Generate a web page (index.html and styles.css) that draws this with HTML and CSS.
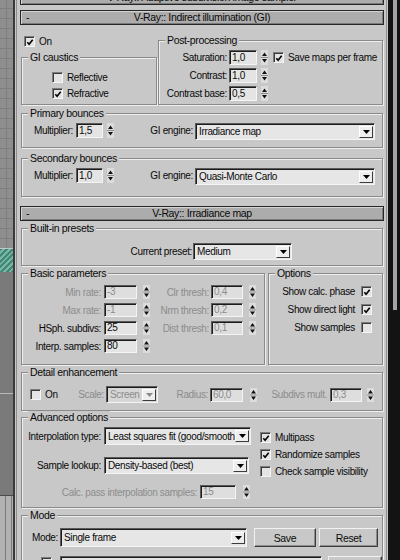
FILE: index.html
```html
<!DOCTYPE html>
<html>
<head>
<meta charset="utf-8">
<title>V-Ray settings</title>
<link rel="stylesheet" href="styles.css">
</head>
<body>
<div class="app">
  <div class="viewport">
    <div class="vp-grid"></div>
    <div class="vp-teal"></div>
    <div class="vp-mid"></div>
    <div class="vp-time"></div>
  </div>
  <div class="sep"></div>
  <div class="panel">
    <div class="hdr hdr-cut"><span class="sign">+</span><span class="title">V-Ray:: Adaptive subdivision image sampler</span></div>

    <div class="hdr hdr-gi"><span class="sign">-</span><span class="title">V-Ray:: Indirect illumination (GI)</span></div>
    <div class="rbody">
      <div class="gi-top">
        <div class="col-left">
          <div class="chk-row on-row">
            <span class="cb"><svg width="9" height="9" viewBox="0 0 9 9"><path d="M1.5 4.2 L3.5 6.5 L7.5 1.5" fill="none" stroke="#000" stroke-width="1.8"/></svg></span>
            <span class="ctext">On</span>
          </div>
          <div class="grp gi-caustics">
            <span class="glab">GI caustics</span>
            <div class="chk-row">
              <span class="cb"></span>
              <span class="ctext">Reflective</span>
            </div>
            <div class="chk-row">
              <span class="cb"><svg width="9" height="9" viewBox="0 0 9 9"><path d="M1.5 4.2 L3.5 6.5 L7.5 1.5" fill="none" stroke="#000" stroke-width="1.8"/></svg></span>
              <span class="ctext">Refractive</span>
            </div>
          </div>
        </div>
        <div class="grp post">
          <span class="glab">Post-processing</span>
          <div class="prow">
            <span class="lab l-post">Saturation:</span>
            <span class="num n-post">1,0</span>
            <svg class="spin" width="7" height="15" viewBox="0 0 7 15"><rect width="7" height="15" fill="#dcdcdc"/><path d="M0 7.5h7" stroke="#8a8a8a"/><path d="M1 6h5L3.5 2.5z M1 9h5L3.5 12.5z" fill="#111"/></svg>
            <span class="cb cb-save"><svg width="9" height="9" viewBox="0 0 9 9"><path d="M1.5 4.2 L3.5 6.5 L7.5 1.5" fill="none" stroke="#000" stroke-width="1.8"/></svg></span>
            <span class="ctext">Save maps per frame</span>
          </div>
          <div class="prow">
            <span class="lab l-post">Contrast:</span>
            <span class="num n-post">1,0</span>
            <svg class="spin" width="7" height="15" viewBox="0 0 7 15"><rect width="7" height="15" fill="#dcdcdc"/><path d="M0 7.5h7" stroke="#8a8a8a"/><path d="M1 6h5L3.5 2.5z M1 9h5L3.5 12.5z" fill="#111"/></svg>
          </div>
          <div class="prow">
            <span class="lab l-post">Contrast base:</span>
            <span class="num n-post">0,5</span>
            <svg class="spin" width="7" height="15" viewBox="0 0 7 15"><rect width="7" height="15" fill="#dcdcdc"/><path d="M0 7.5h7" stroke="#8a8a8a"/><path d="M1 6h5L3.5 2.5z M1 9h5L3.5 12.5z" fill="#111"/></svg>
          </div>
        </div>
      </div>

      <div class="grp bounce primary">
        <span class="glab">Primary bounces</span>
        <div class="brow-b">
          <span class="lab l-mult">Multiplier:</span>
          <span class="num n-mult">1,5</span>
          <svg class="spin s-mult" width="7" height="15" viewBox="0 0 7 15"><rect width="7" height="15" fill="#dcdcdc"/><path d="M0 7.5h7" stroke="#8a8a8a"/><path d="M1 6h5L3.5 2.5z M1 9h5L3.5 12.5z" fill="#111"/></svg>
          <span class="lab l-eng">GI engine:</span>
          <div class="dd d-eng"><span class="ddtext">Irradiance map</span><span class="ddbtn"><svg width="7" height="4" viewBox="0 0 7 4"><path d="M0 0h7L3.5 4z" fill="#000"/></svg></span></div>
        </div>
      </div>

      <div class="grp bounce secondary">
        <span class="glab">Secondary bounces</span>
        <div class="brow-b">
          <span class="lab l-mult">Multiplier:</span>
          <span class="num n-mult">1,0</span>
          <svg class="spin s-mult" width="7" height="15" viewBox="0 0 7 15"><rect width="7" height="15" fill="#dcdcdc"/><path d="M0 7.5h7" stroke="#8a8a8a"/><path d="M1 6h5L3.5 2.5z M1 9h5L3.5 12.5z" fill="#111"/></svg>
          <span class="lab l-eng">GI engine:</span>
          <div class="dd d-eng"><span class="ddtext">Quasi-Monte Carlo</span><span class="ddbtn"><svg width="7" height="4" viewBox="0 0 7 4"><path d="M0 0h7L3.5 4z" fill="#000"/></svg></span></div>
        </div>
      </div>
    </div>

    <div class="hdr hdr-irr"><span class="sign">-</span><span class="title">V-Ray:: Irradiance map</span></div>
    <div class="rbody">
      <div class="grp presets">
        <span class="glab">Built-in presets</span>
        <div class="preset-row">
          <span class="lab">Current preset:</span>
          <div class="dd d-preset"><span class="ddtext">Medium</span><span class="ddbtn"><svg width="7" height="4" viewBox="0 0 7 4"><path d="M0 0h7L3.5 4z" fill="#000"/></svg></span></div>
        </div>
      </div>

      <div class="basic-opts">
        <div class="grp basic">
          <span class="glab">Basic parameters</span>
          <div class="brow">
            <span class="lab l-b1 dis">Min rate:</span>
            <span class="num n-b1 dis">-3</span>
            <svg class="spin s-b" width="7" height="14" viewBox="0 0 7 14"><rect width="7" height="14" fill="#dcdcdc"/><path d="M0 7h7" stroke="#8a8a8a"/><path d="M1 5.5h5L3.5 2z M1 8.5h5L3.5 12z" fill="#111"/></svg>
            <span class="lab l-b2 dis">Clr thresh:</span>
            <span class="num n-b2 dis">0,4</span>
            <svg class="spin s-b" width="7" height="14" viewBox="0 0 7 14"><rect width="7" height="14" fill="#dcdcdc"/><path d="M0 7h7" stroke="#8a8a8a"/><path d="M1 5.5h5L3.5 2z M1 8.5h5L3.5 12z" fill="#111"/></svg>
          </div>
          <div class="brow">
            <span class="lab l-b1 dis">Max rate:</span>
            <span class="num n-b1 dis">-1</span>
            <svg class="spin s-b" width="7" height="14" viewBox="0 0 7 14"><rect width="7" height="14" fill="#dcdcdc"/><path d="M0 7h7" stroke="#8a8a8a"/><path d="M1 5.5h5L3.5 2z M1 8.5h5L3.5 12z" fill="#111"/></svg>
            <span class="lab l-b2 dis">Nrm thresh:</span>
            <span class="num n-b2 dis">0,2</span>
            <svg class="spin s-b" width="7" height="14" viewBox="0 0 7 14"><rect width="7" height="14" fill="#dcdcdc"/><path d="M0 7h7" stroke="#8a8a8a"/><path d="M1 5.5h5L3.5 2z M1 8.5h5L3.5 12z" fill="#111"/></svg>
          </div>
          <div class="brow">
            <span class="lab l-b1">HSph. subdivs:</span>
            <span class="num n-b1">25</span>
            <svg class="spin s-b" width="7" height="14" viewBox="0 0 7 14"><rect width="7" height="14" fill="#dcdcdc"/><path d="M0 7h7" stroke="#8a8a8a"/><path d="M1 5.5h5L3.5 2z M1 8.5h5L3.5 12z" fill="#111"/></svg>
            <span class="lab l-b2 dis">Dist thresh:</span>
            <span class="num n-b2 dis">0,1</span>
            <svg class="spin s-b" width="7" height="14" viewBox="0 0 7 14"><rect width="7" height="14" fill="#dcdcdc"/><path d="M0 7h7" stroke="#8a8a8a"/><path d="M1 5.5h5L3.5 2z M1 8.5h5L3.5 12z" fill="#111"/></svg>
          </div>
          <div class="brow">
            <span class="lab l-b1">Interp. samples:</span>
            <span class="num n-b1">80</span>
            <svg class="spin s-b" width="7" height="14" viewBox="0 0 7 14"><rect width="7" height="14" fill="#dcdcdc"/><path d="M0 7h7" stroke="#8a8a8a"/><path d="M1 5.5h5L3.5 2z M1 8.5h5L3.5 12z" fill="#111"/></svg>
          </div>
        </div>
        <div class="grp opts">
          <span class="glab">Options</span>
          <div class="orow">
            <span class="ctext">Show calc. phase</span>
            <span class="cb"><svg width="9" height="9" viewBox="0 0 9 9"><path d="M1.5 4.2 L3.5 6.5 L7.5 1.5" fill="none" stroke="#000" stroke-width="1.8"/></svg></span>
          </div>
          <div class="orow">
            <span class="ctext">Show direct light</span>
            <span class="cb"><svg width="9" height="9" viewBox="0 0 9 9"><path d="M1.5 4.2 L3.5 6.5 L7.5 1.5" fill="none" stroke="#000" stroke-width="1.8"/></svg></span>
          </div>
          <div class="orow">
            <span class="ctext">Show samples</span>
            <span class="cb"></span>
          </div>
        </div>
      </div>

      <div class="grp detail">
        <span class="glab">Detail enhancement</span>
        <div class="drow">
          <span class="cb cb-don"></span>
          <span class="ctext d-on">On</span>
          <span class="lab l-scale dis">Scale:</span>
          <div class="dd d-screen dis"><span class="ddtext">Screen</span><span class="ddbtn"><svg width="7" height="4" viewBox="0 0 7 4"><path d="M0 0h7L3.5 4z" fill="#8a8a8a"/></svg></span></div>
          <span class="lab l-rad dis">Radius:</span>
          <span class="num n-rad dis">60,0</span>
          <svg class="spin s-rad" width="7" height="14" viewBox="0 0 7 14"><rect width="7" height="14" fill="#dcdcdc"/><path d="M0 7h7" stroke="#8a8a8a"/><path d="M1 5.5h5L3.5 2z M1 8.5h5L3.5 12z" fill="#111"/></svg>
          <span class="lab l-sub dis">Subdivs mult.</span>
          <span class="num n-sub dis">0,3</span>
          <svg class="spin s-sub" width="7" height="14" viewBox="0 0 7 14"><rect width="7" height="14" fill="#dcdcdc"/><path d="M0 7h7" stroke="#8a8a8a"/><path d="M1 5.5h5L3.5 2z M1 8.5h5L3.5 12z" fill="#111"/></svg>
        </div>
      </div>

      <div class="grp adv">
        <span class="glab">Advanced options</span>
        <div class="adv-top">
          <div class="adv-left">
            <div class="arow">
              <span class="lab l-adv">Interpolation type:</span>
              <div class="dd d-interp"><span class="ddtext">Least squares fit (good/smooth</span><span class="ddbtn"><svg width="7" height="4" viewBox="0 0 7 4"><path d="M0 0h7L3.5 4z" fill="#000"/></svg></span></div>
            </div>
            <div class="arow arow2">
              <span class="lab l-adv">Sample lookup:</span>
              <div class="dd d-lookup"><span class="ddtext">Density-based (best)</span><span class="ddbtn"><svg width="7" height="4" viewBox="0 0 7 4"><path d="M0 0h7L3.5 4z" fill="#000"/></svg></span></div>
            </div>
          </div>
          <div class="adv-right">
            <div class="chk-row">
              <span class="cb"><svg width="9" height="9" viewBox="0 0 9 9"><path d="M1.5 4.2 L3.5 6.5 L7.5 1.5" fill="none" stroke="#000" stroke-width="1.8"/></svg></span>
              <span class="ctext">Multipass</span>
            </div>
            <div class="chk-row">
              <span class="cb"><svg width="9" height="9" viewBox="0 0 9 9"><path d="M1.5 4.2 L3.5 6.5 L7.5 1.5" fill="none" stroke="#000" stroke-width="1.8"/></svg></span>
              <span class="ctext">Randomize samples</span>
            </div>
            <div class="chk-row">
              <span class="cb"></span>
              <span class="ctext">Check sample visibility</span>
            </div>
          </div>
        </div>
        <div class="calc">
          <span class="lab l-calc dis">Calc. pass interpolation samples:</span>
          <span class="num n-calc dis">15</span>
          <svg class="spin s-calc" width="7" height="14" viewBox="0 0 7 14"><rect width="7" height="14" fill="#dcdcdc"/><path d="M0 7h7" stroke="#8a8a8a"/><path d="M1 5.5h5L3.5 2z M1 8.5h5L3.5 12z" fill="#111"/></svg>
        </div>
      </div>

      <div class="grp mode">
        <span class="glab">Mode</span>
        <div class="mrow">
          <span class="lab l-mode">Mode:</span>
          <div class="dd d-mode"><span class="ddtext">Single frame</span><span class="ddbtn"><svg width="7" height="4" viewBox="0 0 7 4"><path d="M0 0h7L3.5 4z" fill="#000"/></svg></span></div>
          <span class="btn b-save">Save</span>
          <span class="btn b-reset">Reset</span>
        </div>
        <div class="mrow2">
          <span class="cb cb-file"></span>
          <span class="num n-file"></span>
          <span class="btn b-browse"></span>
        </div>
      </div>
    </div>
  </div>
  <div class="scroll"><div class="thumb"></div></div>
</div>
</body>
</html>
```

FILE: styles.css
```css
* { box-sizing: border-box; }
html, body { margin: 0; padding: 0; }
body {
  width: 400px;
  height: 560px;
  overflow: hidden;
  background: #c8c8c8;
  color: #0a0a0a;
  font-family: "Liberation Sans", Arial, sans-serif;
  font-size: 10px;
  letter-spacing: -0.35px;
}
.app { display: flex; height: 560px; overflow: hidden; }

/* left viewport strip */
.viewport { width: 13px; display: flex; flex-direction: column; background: #7c7c7c; }
.vp-grid {
  height: 248px;
  background:
    repeating-linear-gradient(0deg, transparent 0 9px, #7e7e7e 9px 10px),
    repeating-linear-gradient(90deg, transparent 0 6px, #7e7e7e 6px 7px),
    #8e8e8e;
}
.vp-teal {
  height: 24px;
  border-top: 1px solid #b9c9c3;
  background: repeating-linear-gradient(135deg, #3d8a77 0 2px, #7fb3a6 2px 4px);
}
.vp-mid {
  flex: 1;
  background: linear-gradient(180deg, #7a7a7a 0 121px, #b8b8b8 121px 122px, #7a7a7a 122px);
  border-bottom: 1px solid #4a4a4a;
}
.vp-time {
  height: 64px;
  background:
    repeating-linear-gradient(90deg, transparent 0 5px, #7a7a7a 5px 6px),
    #b2b2b2;
}
.sep { width: 2px; background: #3a3a3a; }

/* right scrollbar */
.scroll { width: 12px; background: #131313; padding: 0 3px 0 5px; }
.thumb { height: 310px; background: #a4a4a4; }

/* command panel */
.panel {
  width: 373px;
  padding: 0 4px 0 5px;
  background: #c8c8c8;
  overflow: hidden;
  box-shadow: inset 1px 0 0 #c8c8c8, inset 2px 0 0 #8e8e8e, inset -1px 0 0 #c8c8c8, inset -2px 0 0 #8e8e8e;
}

.hdr {
  height: 15px;
  display: flex;
  align-items: center;
  border: 1px solid #262626;
  background: #acacac;
  box-shadow: inset 1px 1px 0 #d4d4d4, inset -1px -1px 0 #7a7a7a;
  line-height: 13px;
  font-size: 10.5px;
}
.hdr .sign { width: 18px; padding-left: 5px; }
.hdr .title { flex: 1; text-align: center; margin-right: 18px; white-space: nowrap; }
.hdr-cut { margin-top: -10px; }
.hdr-gi { margin-top: 5px; }
.hdr-irr { margin-top: 9px; }

.rbody { padding: 0 1px; }

/* group boxes */
.grp {
  position: relative;
  border: 1px solid #8a8a8a;
  box-shadow: inset 1px 1px 0 #eeeeee, 1px 1px 0 #eeeeee;
}
.glab {
  position: absolute;
  top: -7px;
  left: 6px;
  padding: 0 2px;
  line-height: 13px;
  font-size: 10.5px;
  background: #c8c8c8;
  white-space: nowrap;
}

/* widgets */
.lab { text-align: right; white-space: nowrap; line-height: 13px; flex: none; }
.dis { color: #8c8c8c; }
.ctext { white-space: nowrap; line-height: 11px; }

.cb {
  flex: none;
  width: 11px;
  height: 11px;
  display: flex;
  align-items: center;
  justify-content: center;
  background: #e4e4e4;
  border-top: 1px solid #7c7c7c;
  border-left: 1px solid #7c7c7c;
  border-right: 1px solid #f4f4f4;
  border-bottom: 1px solid #f4f4f4;
  box-shadow: inset 1px 1px 0 #3a3a3a;
}
.cb svg { display: block; margin: 1px 0 0 1px; }
.chk-row { display: flex; align-items: center; height: 11px; }
.chk-row .ctext { margin-left: 4px; }

.num {
  flex: none;
  height: 15px;
  padding-left: 2px;
  line-height: 13px;
  background: #e4e4e4;
  border-top: 1px solid #5a5a5a;
  border-left: 1px solid #5a5a5a;
  border-right: 1px solid #f4f4f4;
  border-bottom: 1px solid #f4f4f4;
  box-shadow: inset 1px 1px 0 #1c1c1c;
  white-space: nowrap;
}
.num.dis { background: #dedede; }
.spin { flex: none; display: block; }

.dd {
  flex: none;
  height: 17px;
  display: flex;
  align-items: center;
  padding: 0 1px 0 3px;
  background: #e6e6e6;
  border-top: 1px solid #5a5a5a;
  border-left: 1px solid #5a5a5a;
  border-right: 1px solid #f4f4f4;
  border-bottom: 1px solid #f4f4f4;
  box-shadow: inset 1px 1px 0 #1c1c1c;
}
.dd.dis { background: #d6d6d6; }
.ddtext { flex: 1; white-space: nowrap; overflow: hidden; line-height: 13px; }
.ddbtn {
  flex: none;
  width: 14px;
  height: 12px;
  display: flex;
  align-items: center;
  justify-content: center;
  background: #eeeeee;
  border: 1px solid;
  border-color: #ffffff #3c3c3c #3c3c3c #ffffff;
}
.ddbtn svg { display: block; }

.btn {
  flex: none;
  height: 19px;
  display: flex;
  align-items: center;
  justify-content: center;
  background: #c8c8c8;
  border: 1px solid;
  border-color: #f2f2f2 #3c3c3c #3c3c3c #f2f2f2;
  box-shadow: inset -1px -1px 0 #8c8c8c;
  font-size: 10.5px;
}

/* GI rollout */
.gi-top { display: flex; gap: 1px; }
.col-left { width: 136px; padding-top: 11px; }
.on-row { padding-left: 3px; }
.gi-caustics { margin-top: 10px; height: 48px; padding: 14px 0 0 30px; }
.gi-caustics .chk-row + .chk-row { margin-top: 5px; }

.post { flex: 1; margin-top: 15px; height: 65px; padding-top: 9px; }
.prow { display: flex; align-items: center; height: 15px; margin-bottom: 3px; }
.l-post { width: 68px; }
.n-post { width: 28px; margin-left: 2px; }
.prow .spin { margin-left: 4px; }
.cb-save { margin-left: 5px; }
.prow .ctext { margin-left: 4px; }

.bounce { padding-top: 9px; }
.primary { margin-top: 8px; height: 35px; }
.secondary { margin-top: 10px; height: 39px; }
.brow-b { display: flex; align-items: flex-start; }
.brow-b .lab { line-height: 15px; }
.l-mult { width: 51px; }
.n-mult { width: 27px; margin-left: 3px; }
.s-mult { margin-left: 4px; }
.l-eng { width: 53px; margin-left: 26px; }
.d-eng { width: 180px; margin-left: 2px; }

/* Irradiance map rollout */
.presets { margin-top: 7px; height: 38px; padding: 14px 0 0 107px; }
.preset-row { display: flex; align-items: center; }
.preset-row .lab { width: 63px; }
.d-preset { width: 99px; margin-left: 1px; }

.basic-opts { display: flex; gap: 3px; margin-top: 7px; }
.basic { width: 244px; height: 92px; padding-top: 11px; }
.opts { flex: 1; height: 92px; padding: 12px 10px 0 0; }
.brow { display: flex; align-items: center; height: 14px; margin-bottom: 4px; }
.brow .num { height: 14px; line-height: 12px; }
.l-b1 { width: 79px; }
.n-b1 { width: 33px; margin-left: 3px; }
.s-b { margin-left: 6px; }
.l-b2 { width: 59px; }
.n-b2 { width: 32px; margin-left: 2px; }
.orow { display: flex; align-items: center; justify-content: flex-end; height: 11px; margin-bottom: 7px; }
.orow .cb { margin-left: 6px; }

.detail { margin-top: 7px; height: 39px; padding-top: 13px; }
.drow { display: flex; align-items: center; height: 17px; }
.drow .num { height: 14px; line-height: 12px; }
.cb-don { margin-left: 8px; }
.d-on { width: 19px; margin-left: 4px; }
.l-scale { width: 40px; }
.d-screen { width: 52px; margin-left: 2px; }
.l-rad { width: 50px; }
.n-rad { width: 33px; margin-left: 2px; }
.s-rad { margin-left: 7px; }
.l-sub { width: 70px; }
.n-sub { width: 32px; margin-left: 3px; }
.s-sub { margin-left: 5px; }

.adv { margin-top: 6px; height: 91px; padding-top: 9px; }
.adv-top { display: flex; }
.adv-left { width: 230px; }
.arow { display: flex; align-items: center; }
.arow2 { margin-top: 12px; }
.l-adv { width: 79px; }
.d-interp { width: 147px; height: 18px; margin-left: 3px; }
.d-lookup { width: 145px; margin-left: 3px; }
.adv-right { margin-top: 5px; padding-left: 8px; }
.adv-right .chk-row + .chk-row { margin-top: 6px; }
.calc { display: flex; align-items: center; height: 14px; margin-top: 8px; }
.calc .num { height: 14px; line-height: 12px; }
.l-calc { width: 175px; }
.n-calc { width: 36px; margin-left: 3px; }
.s-calc { margin-left: 7px; }

.mode { margin-top: 7px; height: 70px; padding-top: 12px; }
.mrow { display: flex; align-items: center; }
.l-mode { width: 36px; }
.d-mode { width: 187px; height: 19px; margin-left: 2px; }
.b-save { width: 62px; margin-left: 7px; }
.b-reset { width: 59px; margin-left: 3px; }
.mrow2 { display: flex; align-items: flex-start; margin-top: 9px; }
.cb-file { margin: 1px 0 0 19px; }
.n-file { width: 262px; height: 18px; margin-left: 8px; }
.b-browse { width: 54px; margin-left: 6px; }
```
